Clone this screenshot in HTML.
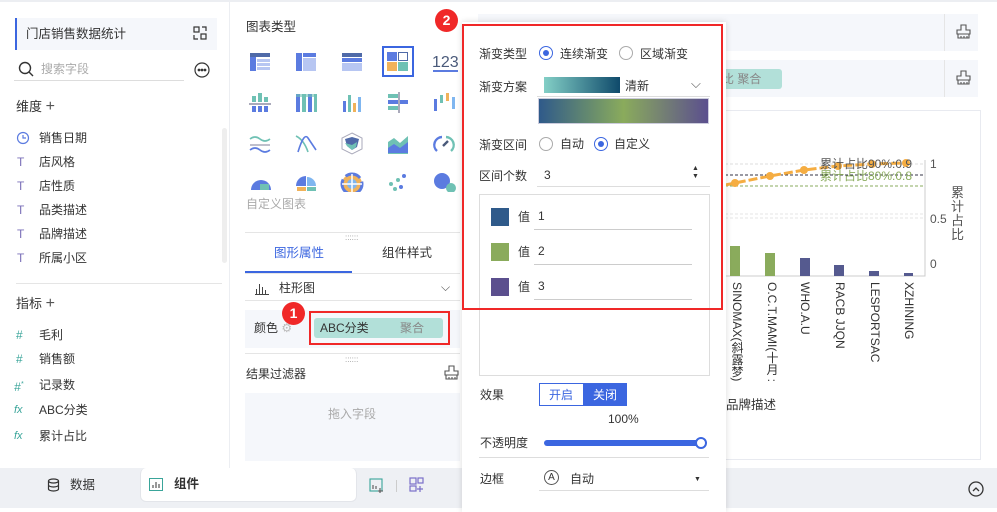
<!DOCTYPE html>
<html><head><meta charset="utf-8"><style>
*{box-sizing:border-box;margin:0;padding:0}
body{width:997px;height:508px;overflow:hidden;background:#fff;font-family:"Liberation Sans","Noto Sans CJK SC",sans-serif;font-size:12px;color:#333;position:relative}
.a{position:absolute}
.t{position:absolute;white-space:nowrap;line-height:16px}
</style></head><body>
<div class="a" style="left:0;top:0;width:997px;height:2px;background:#eceef2"></div>
<!-- left panel -->
<div class="a" style="left:15px;top:18px;width:202px;height:32px;background:#f5f7fb;border-left:2px solid #3b66e0"></div>
<div class="t" style="left:26px;top:26px;font-size:12.5px">门店销售数据统计</div>
<svg class="a" style="left:193px;top:26px" width="14" height="14" viewBox="0 0 14 14" fill="none" stroke="#333" stroke-width="1.2"><rect x="1" y="1" width="5" height="5"/><rect x="8" y="8" width="5" height="5"/><path d="M9 1h4v4M1 9v4h4"/></svg>
<svg class="a" style="left:18px;top:61px" width="16" height="16" viewBox="0 0 16 16" fill="none" stroke="#333" stroke-width="1.4"><circle cx="7" cy="7" r="5.5"/><path d="M11 11l4 4"/></svg>
<div class="t" style="left:41px;top:61px;color:#aaa">搜索字段</div>
<div class="a" style="left:14px;top:80px;width:170px;height:1px;background:#ddd"></div>
<svg class="a" style="left:194px;top:62px" width="16" height="16" viewBox="0 0 16 16" fill="none" stroke="#333" stroke-width="1.2"><circle cx="8" cy="8" r="7"/><circle cx="5" cy="8" r=".8" fill="#333"/><circle cx="8" cy="8" r=".8" fill="#333"/><circle cx="11" cy="8" r=".8" fill="#333"/></svg>
<div class="t" style="left:16px;top:99px;font-size:13px">维度 <span style="font-size:16px;color:#555">+</span></div>
<svg class="a" style="left:16px;top:131px" width="14" height="14" viewBox="0 0 14 14" fill="none" stroke="#5b7be0" stroke-width="1.2"><circle cx="7" cy="7" r="5.5"/><path d="M7 4v3h3"/></svg>
<div class="t" style="left:39px;top:130px">销售日期</div>
<div class="t" style="left:17px;top:154px;color:#7a6fb8">T</div><div class="t" style="left:39px;top:154px">店风格</div>
<div class="t" style="left:17px;top:178px;color:#7a6fb8">T</div><div class="t" style="left:39px;top:178px">店性质</div>
<div class="t" style="left:17px;top:202px;color:#7a6fb8">T</div><div class="t" style="left:39px;top:202px">品类描述</div>
<div class="t" style="left:17px;top:226px;color:#7a6fb8">T</div><div class="t" style="left:39px;top:226px">品牌描述</div>
<div class="t" style="left:17px;top:250px;color:#7a6fb8">T</div><div class="t" style="left:39px;top:250px">所属小区</div>
<div class="a" style="left:222px;top:128px;width:5px;height:135px;background:#eee;border-radius:3px"></div>
<div class="a" style="left:16px;top:283px;width:206px;height:1px;background:#e5e5e5"></div>
<div class="t" style="left:16px;top:296px;font-size:13px">指标 <span style="font-size:16px;color:#555">+</span></div>
<div class="t" style="left:16px;top:327px;color:#3aa59a">#</div><div class="t" style="left:39px;top:327px">毛利</div>
<div class="t" style="left:16px;top:351px;color:#3aa59a">#</div><div class="t" style="left:39px;top:351px">销售额</div>
<div class="t" style="left:14px;top:377px;color:#3aa59a;font-style:italic">#<sup style="font-size:7px">*</sup></div><div class="t" style="left:39px;top:377px">记录数</div>
<div class="t" style="left:14px;top:402px;color:#3aa59a;font-style:italic;font-size:11px">fx</div><div class="t" style="left:39px;top:402px">ABC分类</div>
<div class="t" style="left:14px;top:428px;color:#3aa59a;font-style:italic;font-size:11px">fx</div><div class="t" style="left:39px;top:428px">累计占比</div>
<div class="a" style="left:229px;top:2px;width:1px;height:466px;background:#eceef2"></div>
<!-- middle panel -->
<div class="t" style="left:246px;top:19px;font-size:12.5px">图表类型</div>
<div class="a" style="left:382px;top:46px;width:32px;height:31px;border:2px solid #3b66e0"></div>
<svg class="a" style="left:248px;top:50px" width="210" height="142" viewBox="0 0 210 142">
<g><rect x="2" y="3" width="20" height="4" fill="#4f6aa8"/><rect x="2" y="7" width="6" height="14" fill="#5b7be0"/><rect x="9" y="9" width="13" height="3" fill="#b7c6f2"/><rect x="9" y="13" width="13" height="3" fill="#b7c6f2"/><rect x="9" y="17" width="13" height="3" fill="#b7c6f2"/></g>
<g transform="translate(46 0)"><rect x="2" y="3" width="6" height="18" fill="#5b7be0"/><rect x="9" y="3" width="13" height="4" fill="#5b7be0"/><rect x="9" y="8" width="13" height="13" fill="#b7c6f2"/></g>
<g transform="translate(92 0)"><rect x="2" y="3" width="20" height="4" fill="#4f6aa8"/><rect x="2" y="8" width="20" height="4" fill="#5b7be0"/><rect x="2" y="13" width="20" height="8" fill="#b7c6f2"/></g>
<g transform="translate(138 0)"><rect x="1" y="2" width="10" height="9" fill="#5b7be0"/><rect x="12.5" y="2.5" width="9" height="8" fill="none" stroke="#4f6aa8"/><rect x="1" y="12" width="10" height="9" fill="#f0b25a"/><rect x="12" y="12" width="10" height="9" fill="#6fc1b4"/></g>
<text x="184" y="17" font-size="16" fill="#4a5a7a" font-family="Liberation Sans">123</text><rect x="185" y="20" width="28" height="2" fill="#5b7be0"/>
<g transform="translate(0 41)"><rect x="1" y="12" width="22" height="2" fill="#aab"/><rect x="4" y="5" width="4" height="6" fill="#6fc1b4"/><rect x="10" y="2" width="4" height="9" fill="#6fc1b4"/><rect x="16" y="6" width="4" height="5" fill="#6fc1b4"/><rect x="4" y="15" width="4" height="6" fill="#5b7be0"/><rect x="10" y="15" width="4" height="6" fill="#5b7be0"/><rect x="16" y="15" width="4" height="6" fill="#5b7be0"/></g>
<g transform="translate(46 41)"><rect x="2" y="3" width="4" height="18" fill="#5b7be0"/><rect x="8" y="3" width="4" height="18" fill="#6fc1b4"/><rect x="14" y="3" width="4" height="18" fill="#5b7be0"/><rect x="20" y="3" width="3" height="18" fill="#6fc1b4"/><rect x="2" y="3" width="21" height="3" fill="#6fc1b4" opacity=".6"/></g>
<g transform="translate(92 41)"><rect x="3" y="10" width="3" height="11" fill="#5b7be0"/><rect x="8" y="4" width="3" height="17" fill="#6fc1b4"/><rect x="13" y="12" width="3" height="9" fill="#f0b25a"/><rect x="18" y="6" width="3" height="15" fill="#7fb6f0"/></g>
<g transform="translate(138 41)"><rect x="2" y="3" width="10" height="4" fill="#6fc1b4"/><rect x="2" y="9" width="20" height="4" fill="#5b7be0"/><rect x="2" y="15" width="12" height="4" fill="#6fc1b4"/><rect x="12" y="1" width="2" height="21" fill="#aab"/></g>
<g transform="translate(184 41)"><rect x="2" y="8" width="3" height="12" fill="#5b7be0"/><rect x="8" y="4" width="3" height="8" fill="#6fc1b4"/><rect x="14" y="2" width="3" height="8" fill="#f0b25a"/><rect x="20" y="6" width="3" height="12" fill="#7fb6f0"/></g>
<g transform="translate(0 82)" fill="none" stroke-width="1.6"><path d="M2 7q5-4 10 0t10 0" stroke="#6fc1b4"/><path d="M2 13h20" stroke="#aab"/><path d="M2 18q5-4 10 0t10 0" stroke="#5b7be0"/></g>
<g transform="translate(46 82)" fill="none" stroke-width="1.6"><path d="M2 4q8 4 12 16" stroke="#6fc1b4"/><path d="M4 20q6-20 10-14t8 12" stroke="#5b7be0"/></g>
<g transform="translate(92 82)"><path d="M12 1l10 5v11l-10 5-10-5V6z" fill="none" stroke="#aab"/><path d="M5 7l7-2 7 2-2 8-5 3-5-4z" fill="#4f6aa8"/><path d="M5 11l7 2 5-3-1 5-4 3-5-4z" fill="#6fc1b4"/></g>
<g transform="translate(138 82)"><path d="M2 10l6-4 6 5 8-7v18H2z" fill="#6fc1b4"/><path d="M2 16l6-4 6 4 8-6v11H2z" fill="#5b7be0"/></g>
<g transform="translate(184 82)" fill="none" stroke-width="2.4"><path d="M5 19a8 8 0 0 1 5-14" stroke="#5b7be0"/><path d="M14 5a8 8 0 0 1 5 14" stroke="#6fc1b4"/><path d="M11 14l5-5" stroke="#4a5a7a"/></g>
<g transform="translate(0 122)"><path d="M3 18a10 10 0 1 1 20 0z" fill="#5b7be0"/><rect x="12" y="12" width="9" height="6" fill="#6fc1b4"/></g>
<g transform="translate(46 122)"><path d="M2 14a10 10 0 0 1 10-10v10z" fill="#5b7be0"/><path d="M13 5a9 9 0 0 1 9 9h-9z" fill="#7fb6f0"/><rect x="3" y="15" width="9" height="4" fill="#f0b25a"/><rect x="13" y="15" width="9" height="4" fill="#6fc1b4"/></g>
<g transform="translate(92 122)"><circle cx="12" cy="12" r="10" fill="#f0b25a"/><circle cx="12" cy="12" r="10" fill="none" stroke="#5b7be0" stroke-width="3" stroke-dasharray="16 4"/><circle cx="12" cy="12" r="5" fill="#7fb6f0"/><path d="M12 2v20M2 12h20" stroke="#fff" stroke-width="1.5"/></g>
<g transform="translate(138 122)" fill="#6fc1b4"><circle cx="18" cy="4" r="2" fill="#5b7be0"/><circle cx="12" cy="8" r="2"/><circle cx="5" cy="12" r="2"/><circle cx="15" cy="15" r="2" fill="#5b7be0"/><circle cx="9" cy="17" r="2"/></g>
<g transform="translate(184 122)"><circle cx="10" cy="9" r="8" fill="#5b7be0"/><circle cx="19" cy="16" r="5" fill="#6fc1b4"/></g>
</svg>
<div class="t" style="left:246px;top:196px;color:#aaa">自定义图表</div>
<div class="a" style="left:245px;top:232px;width:215px;height:1px;background:#e5e5e5"></div>
<div class="t" style="left:345px;top:230px;color:#999;font-size:8px">::::::</div>
<div class="t" style="left:274px;top:245px;color:#3b66e0;font-size:12.5px">图形属性</div>
<div class="t" style="left:382px;top:245px;font-size:12.5px">组件样式</div>
<div class="a" style="left:245px;top:271px;width:107px;height:2px;background:#3b66e0"></div>
<div class="a" style="left:245px;top:273px;width:215px;height:1px;background:#e5e5e5"></div>
<svg class="a" style="left:255px;top:281px" width="14" height="14" viewBox="0 0 14 14" fill="none" stroke="#444" stroke-width="1"><path d="M1.5 13V8M4.5 13V3M7.5 13V6M10.5 13V9M0 13.5h14"/></svg>
<div class="t" style="left:279px;top:280px">柱形图</div>
<div class="t" style="left:441px;top:279px;color:#555">⌵</div>
<div class="a" style="left:245px;top:300px;width:215px;height:1px;background:#e5e5e5"></div>
<div class="a" style="left:245px;top:310px;width:215px;height:38px;background:#f5f7fb"></div>
<div class="t" style="left:254px;top:320px">颜色 <span style="color:#bbb">⚙</span></div>
<div class="a" style="left:314px;top:318px;width:129px;height:20px;background:#b2e0d9;border-radius:3px"></div>
<div class="t" style="left:320px;top:320px;font-size:12px">ABC分类</div>
<div class="t" style="left:400px;top:320px;color:#888">聚合</div>
<div class="a" style="left:309px;top:311px;width:141px;height:34px;border:2px solid #f02828"></div>
<div class="a" style="left:282px;top:302px;width:23px;height:23px;border-radius:50%;background:#f02828;color:#fff;font-weight:bold;font-size:14px;text-align:center;line-height:23px">1</div>
<div class="a" style="left:245px;top:353px;width:215px;height:1px;background:#e5e5e5"></div>
<div class="t" style="left:345px;top:352px;color:#999;font-size:8px">::::::</div>
<div class="t" style="left:246px;top:366px">结果过滤器</div>
<div class="a" style="left:245px;top:393px;width:215px;height:68px;background:#f5f7fb"></div>
<div class="t" style="left:328px;top:406px;color:#aaa">拖入字段</div>
<!-- right chart area -->
<div class="a" style="left:478px;top:14px;width:500px;height:37px;background:#f5f7fb"></div>
<div class="a" style="left:478px;top:60px;width:500px;height:37px;background:#f5f7fb"></div>
<div class="a" style="left:944px;top:14px;width:1px;height:37px;background:#e5e5e5"></div>
<div class="a" style="left:944px;top:60px;width:1px;height:37px;background:#e5e5e5"></div>
<div class="a" style="left:700px;top:69px;width:82px;height:20px;background:#b2e0d9;border-radius:3px"></div>
<div class="t" style="left:722px;top:71px;color:#888">比 聚合</div>
<svg class="a" style="left:956px;top:24px" width="15" height="15" viewBox="0 0 15 15" fill="none" stroke="#555" stroke-width="1.1"><path d="M5 1h5v5h4v4H1V6h4zM2 10v4h11v-4M5 12v2M8 12v2M11 12v2"/></svg>
<svg class="a" style="left:956px;top:70px" width="15" height="15" viewBox="0 0 15 15" fill="none" stroke="#555" stroke-width="1.1"><path d="M5 1h5v5h4v4H1V6h4zM2 10v4h11v-4M5 12v2M8 12v2M11 12v2"/></svg>
<svg class="a" style="left:444px;top:365px" width="15" height="15" viewBox="0 0 15 15" fill="none" stroke="#555" stroke-width="1.1"><path d="M5 1h5v5h4v4H1V6h4zM2 10v4h11v-4M5 12v2M8 12v2M11 12v2"/></svg>
<div class="a" style="left:478px;top:110px;width:503px;height:350px;border:1px solid #e8eaf0"></div>
<svg class="a" style="left:725px;top:150px" width="260" height="140">
<g stroke-width="1" fill="none"><path d="M0 14H200" stroke="#ddd" stroke-dasharray="3 2"/><path d="M0 25H200" stroke="#334" stroke-dasharray="3 2"/><path d="M0 36H200" stroke="#8aab5c" stroke-dasharray="3 2"/><path d="M0 64H200M0 68H200" stroke="#e5e5e5" stroke-dasharray="3 2"/><path d="M200 10V126H0" stroke="#ccc"/></g>
<rect x="5" y="96" width="10" height="30" fill="#8aab5c"/><rect x="40" y="103" width="10" height="23" fill="#8aab5c"/><rect x="75" y="108" width="10" height="18" fill="#555a8f"/><rect x="109" y="115" width="10" height="11" fill="#555a8f"/><rect x="144" y="121" width="10" height="5" fill="#555a8f"/><rect x="179" y="123" width="9" height="3" fill="#555a8f"/>
<path d="M0 35L10 33L45 26L79 20L113 16L147 14L181 13" stroke="#f5ad42" stroke-width="3" fill="none" stroke-dasharray="9 3"/>
<g fill="#f5ad42"><circle cx="10" cy="33" r="4"/><circle cx="45" cy="26" r="4"/><circle cx="79" cy="20" r="4"/><circle cx="113" cy="16" r="4"/><circle cx="147" cy="14" r="4"/><circle cx="181" cy="13" r="4"/></g>
<text x="95" y="18" font-size="12" fill="#555" font-family="Liberation Sans,Noto Sans CJK SC">累计占比90%:0.9</text>
<text x="95" y="30" font-size="12" fill="#8aab5c" font-family="Liberation Sans,Noto Sans CJK SC">累计占比80%:0.8</text>
<g font-size="12" fill="#555" font-family="Liberation Sans"><text x="205" y="18">1</text><text x="205" y="73">0.5</text><text x="205" y="118">0</text></g>
</svg>
<div class="t" style="left:951px;top:186px;width:16px;white-space:normal;line-height:14px;font-size:13px;color:#555">累计占比</div>
<div class="a" style="left:728px;top:282px;width:200px;height:100px;font-size:12px;color:#333">
<div class="a" style="left:1px;top:0;writing-mode:vertical-rl;white-space:nowrap">SINOMAX(斜露梦)</div>
<div class="a" style="left:36px;top:0;writing-mode:vertical-rl;white-space:nowrap">O.C.T.MAMI(十月 :</div>
<div class="a" style="left:70px;top:0;writing-mode:vertical-rl;white-space:nowrap">WHO.A.U</div>
<div class="a" style="left:105px;top:0;writing-mode:vertical-rl;white-space:nowrap">RACB JJQN</div>
<div class="a" style="left:140px;top:0;writing-mode:vertical-rl;white-space:nowrap">LESPORTSAC</div>
<div class="a" style="left:174px;top:0;writing-mode:vertical-rl;white-space:nowrap">XZHINING</div>
</div>
<div class="t" style="left:726px;top:397px;font-size:12.5px">品牌描述</div>
<!-- bottom bar -->
<div class="a" style="left:0;top:468px;width:997px;height:40px;background:#eef0f4"></div>
<div class="a" style="left:140px;top:468px;width:217px;height:34px;background:#fff;border-radius:6px;border:1px solid #e3e5ea;border-top:none"></div>
<svg class="a" style="left:47px;top:478px" width="13" height="14" viewBox="0 0 13 14" fill="none" stroke="#333" stroke-width="1.2"><ellipse cx="6.5" cy="3" rx="5" ry="2"/><path d="M1.5 3v8c0 1 2 2 5 2s5-1 5-2V3M1.5 7c0 1 2 2 5 2s5-1 5-2"/></svg>
<div class="t" style="left:70px;top:477px;font-size:12.5px">数据</div>
<svg class="a" style="left:149px;top:478px" width="14" height="13" viewBox="0 0 14 13" fill="none" stroke="#3aa59a" stroke-width="1"><rect x=".5" y=".5" width="13" height="12"/><path d="M4 10V7M7 10V4M10 10V6" stroke="#333"/></svg>
<div class="t" style="left:174px;top:476px;font-size:12.5px;font-weight:bold">组件</div>
<svg class="a" style="left:369px;top:478px" width="16" height="16" viewBox="0 0 16 16" fill="none" stroke="#3aa59a" stroke-width="1.1"><rect x="1" y="1" width="12" height="12"/><path d="M4 11V7M7 11V8M11 10v5M9 13h5" stroke="#555"/></svg>
<div class="a" style="left:396px;top:480px;width:1px;height:12px;background:#ccc"></div>
<svg class="a" style="left:409px;top:477px" width="16" height="16" viewBox="0 0 16 16" fill="none" stroke="#7a6fc8" stroke-width="1.2"><rect x="1" y="1" width="6" height="6"/><rect x="9" y="1" width="5" height="5"/><rect x="1" y="9" width="6" height="5"/><path d="M11 9v6M8 12h6"/></svg>
<svg class="a" style="left:968px;top:481px" width="16" height="16" viewBox="0 0 16 16" fill="none" stroke="#333" stroke-width="1.3"><circle cx="8" cy="8" r="7"/><path d="M5 10l3-3 3 3"/></svg>
<!-- popup -->
<div class="a" style="left:462px;top:22px;width:264px;height:490px;background:#fff;box-shadow:0 0 6px rgba(0,0,0,.15)"></div>
<div class="t" style="left:479px;top:46px">渐变类型</div>
<div class="a" style="left:539px;top:46px;width:14px;height:14px;border-radius:50%;border:1px solid #3b66e0"></div><div class="a" style="left:543px;top:50px;width:6px;height:6px;border-radius:50%;background:#3b66e0"></div>
<div class="t" style="left:560px;top:46px">连续渐变</div>
<div class="a" style="left:619px;top:46px;width:14px;height:14px;border-radius:50%;border:1px solid #aaa"></div>
<div class="t" style="left:640px;top:46px">区域渐变</div>
<div class="t" style="left:479px;top:79px">渐变方案</div>
<div class="a" style="left:544px;top:77px;width:76px;height:16px;background:linear-gradient(90deg,#83cfc6,#0f4a6b)"></div>
<div class="t" style="left:625px;top:78px">清新</div>
<div class="t" style="left:691px;top:76px;color:#555;font-size:13px">⌵</div>
<div class="a" style="left:537px;top:96px;width:173px;height:1px;background:#ddd"></div>
<div class="a" style="left:538px;top:98px;width:171px;height:26px;background:linear-gradient(90deg,#2f5a8a,#8aab5c 50%,#5b4f8e);border:1px solid #ccd"></div>
<div class="t" style="left:479px;top:137px">渐变区间</div>
<div class="a" style="left:539px;top:137px;width:14px;height:14px;border-radius:50%;border:1px solid #aaa"></div>
<div class="t" style="left:560px;top:136px">自动</div>
<div class="a" style="left:594px;top:137px;width:14px;height:14px;border-radius:50%;border:1px solid #3b66e0"></div><div class="a" style="left:598px;top:141px;width:6px;height:6px;border-radius:50%;background:#3b66e0"></div>
<div class="t" style="left:614px;top:136px">自定义</div>
<div class="t" style="left:479px;top:168px">区间个数</div>
<div class="t" style="left:544px;top:167px">3</div>
<div class="t" style="left:692px;top:165px;font-size:7px;line-height:8px">▲<br>▼</div>
<div class="a" style="left:537px;top:186px;width:173px;height:1px;background:#ddd"></div>
<div class="a" style="left:479px;top:194px;width:231px;height:182px;border:1px solid #ddd"></div>
<div class="a" style="left:491px;top:208px;width:18px;height:18px;background:#2f5a8a"></div>
<div class="a" style="left:491px;top:243px;width:18px;height:18px;background:#8aab5c"></div>
<div class="a" style="left:491px;top:278px;width:18px;height:18px;background:#5b4f8e"></div>
<div class="t" style="left:518px;top:209px">值</div><div class="t" style="left:538px;top:208px">1</div>
<div class="t" style="left:518px;top:244px">值</div><div class="t" style="left:538px;top:243px">2</div>
<div class="t" style="left:518px;top:279px">值</div><div class="t" style="left:538px;top:278px">3</div>
<div class="a" style="left:534px;top:229px;width:158px;height:1px;background:#ccc"></div>
<div class="a" style="left:534px;top:264px;width:158px;height:1px;background:#ccc"></div>
<div class="a" style="left:534px;top:299px;width:158px;height:1px;background:#ccc"></div>
<div class="a" style="left:462px;top:24px;width:261px;height:286px;border:2px solid #f02828"></div>
<div class="a" style="left:435px;top:9px;width:23px;height:23px;border-radius:50%;background:#f02828;color:#fff;font-weight:bold;font-size:14px;text-align:center;line-height:23px">2</div>
<div class="t" style="left:480px;top:387px">效果</div>
<div class="a" style="left:539px;top:383px;width:88px;height:23px;border:1px solid #3b66e0"></div>
<div class="a" style="left:583px;top:383px;width:44px;height:23px;background:#3b66e0"></div>
<div class="t" style="left:549px;top:387px;color:#3b66e0">开启</div>
<div class="t" style="left:593px;top:387px;color:#fff">关闭</div>
<div class="t" style="left:608px;top:411px">100%</div>
<div class="t" style="left:480px;top:435px">不透明度</div>
<div class="a" style="left:544px;top:440px;width:160px;height:6px;border-radius:3px;background:#3b66e0"></div>
<div class="a" style="left:695px;top:437px;width:12px;height:12px;border-radius:50%;background:#fff;border:2px solid #3b66e0"></div>
<div class="a" style="left:479px;top:457px;width:230px;height:1px;background:#ddd"></div>
<div class="t" style="left:480px;top:471px">边框</div>
<div class="a" style="left:544px;top:470px;width:15px;height:15px;border-radius:50%;border:1px solid #555;font-size:10px;text-align:center;line-height:13px">A</div>
<div class="t" style="left:570px;top:471px">自动</div>
<div class="t" style="left:694px;top:472px;font-size:7px">▼</div>
<div class="a" style="left:539px;top:490px;width:170px;height:1px;background:#ddd"></div>
</body></html>
